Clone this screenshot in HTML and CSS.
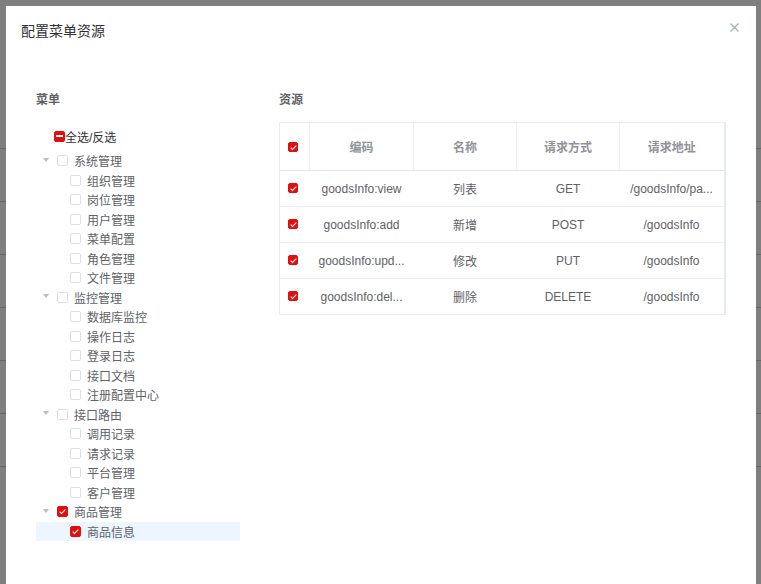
FILE: index.html
```html
<!DOCTYPE html>
<html lang="zh-CN">
<head>
  <meta charset="UTF-8">
  <meta name="viewport" content="width=device-width, initial-scale=1.0">
  <title>配置菜单资源</title>
  <link rel="stylesheet" href="styles.css">
</head>
<body>
  <!-- Halaman di belakang overlay -->
  <div class="page">
    <div class="page-row"></div>
    <div class="page-row"></div>
    <div class="page-row"></div>
    <div class="page-row"></div>
    <div class="page-row"></div>
    <div class="page-row"></div>
    <div class="page-row"></div>
  </div>

  <div class="overlay">
    <div class="dialog">
      <div class="dialog-header">
        <span class="dialog-title">配置菜单资源</span>
        <svg class="close" width="9" height="9" viewBox="0 0 9 9">
          <path d="M0.5 0.5 L8.5 8.5 M8.5 0.5 L0.5 8.5" stroke="#9fb0c4" stroke-width="1.2" fill="none"/>
        </svg>
      </div>

      <div class="dialog-body">
        <div class="menu-col">
          <div class="col-title">菜单</div>
          <div class="check-all">
            <span class="cb half"><i></i></span><span class="check-all-label">全选/反选</span>
          </div>

          <div class="tree" id="tree"></div>
        </div>

        <div class="res-col">
          <div class="col-title">资源</div>
          <table class="res-table">
            <colgroup>
              <col style="width:30px">
              <col style="width:104px">
              <col style="width:103px">
              <col style="width:103px">
              <col style="width:105px">
            </colgroup>
            <thead>
              <tr>
                <th><span class="cb on"></span></th>
                <th>编码</th>
                <th>名称</th>
                <th>请求方式</th>
                <th>请求地址</th>
              </tr>
            </thead>
            <tbody id="resBody"></tbody>
          </table>
        </div>
      </div>
    </div>
  </div>

  <script>
    // data menu pohon
    const menuData = [
      { name: '系统管理', children: ['组织管理', '岗位管理', '用户管理', '菜单配置', '角色管理', '文件管理'] },
      { name: '监控管理', children: ['数据库监控', '操作日志', '登录日志', '接口文档', '注册配置中心'] },
      { name: '接口路由', children: ['调用记录', '请求记录', '平台管理', '客户管理'] },
      { name: '商品管理', children: ['商品信息'], checked: true }
    ];

    const tree = document.getElementById('tree');
    menuData.forEach(group => {
      const row = document.createElement('div');
      row.className = 'node';
      row.innerHTML = '<span class="caret"></span><span class="cb' + (group.checked ? ' on' : '') + '"></span><span class="node-label">' + group.name + '</span>';
      tree.appendChild(row);

      group.children.forEach(child => {
        const sub = document.createElement('div');
        sub.className = 'node child' + (group.checked ? ' current' : '');
        sub.innerHTML = '<span class="caret empty"></span><span class="cb' + (group.checked ? ' on' : '') + '"></span><span class="node-label">' + child + '</span>';
        tree.appendChild(sub);
      });
    });

    // data resource (teks yang tampil sudah dipotong seperti di tabel)
    const resources = [
      ['goodsInfo:view', '列表', 'GET', '/goodsInfo/pa...'],
      ['goodsInfo:add', '新增', 'POST', '/goodsInfo'],
      ['goodsInfo:upd...', '修改', 'PUT', '/goodsInfo'],
      ['goodsInfo:del...', '删除', 'DELETE', '/goodsInfo']
    ];

    const resBody = document.getElementById('resBody');
    resources.forEach(item => {
      const tr = document.createElement('tr');
      tr.innerHTML = '<td><span class="cb on"></span></td>' +
        item.map(v => '<td><div class="cell">' + v + '</div></td>').join('');
      resBody.appendChild(tr);
    });
  </script>
</body>
</html>
```

FILE: styles.css
```css
body {
  margin: 0;
  font-family: "Liberation Sans", "Noto Sans CJK SC", sans-serif;
  background: #fff;
  overflow: hidden;
  height: 584px;
}
.page {
  padding-top: 96px;
}
.page-row {
  height: 52px;
  border-bottom: 1px solid #ccc;
}
.overlay {
  position: fixed;
  top: 0;
  left: 0;
  right: 0;
  bottom: 0;
  background: rgba(0, 0, 0, 0.5);
}
.dialog {
  margin: 6px 0 0 6px;
  width: 750px;
  height: 620px;
  background: #fff;
}
.dialog-header {
  display: flex;
  justify-content: space-between;
  align-items: flex-start;
  padding: 15px 17px 0 15px;
}
.dialog-title {
  font-size: 14px;
  line-height: 20px;
  color: #303133;
}
.close {
  margin-top: 2px;
}
.dialog-body {
  display: flex;
  padding: 51px 0 0 30px;
}
.col-title {
  font-size: 12px;
  line-height: 16px;
  font-weight: bold;
  color: #606266;
}
.menu-col {
  width: 204px;
}
.res-col {
  margin-left: 39px;
  width: 446px;
}

/* checkbox */
.cb {
  position: relative;
  display: inline-flex;
  align-items: center;
  justify-content: center;
  box-sizing: border-box;
  width: 11px;
  height: 11px;
  border: 1px solid #dcdfe6;
  border-radius: 2px;
  background: #fff;
  flex-shrink: 0;
}
.cb.on, .cb.half {
  background: #e0100f;
  border-color: #e0100f;
}
.cb.on::after {
  content: "";
  position: absolute;
  left: 3px;
  top: 1px;
  width: 2px;
  height: 5px;
  border: solid #fff;
  border-width: 0 1.5px 1.5px 0;
  transform: rotate(45deg);
}
.cb.half i {
  display: block;
  width: 7px;
  height: 2px;
  background: #fff;
}

.check-all {
  display: flex;
  align-items: center;
  height: 16px;
  margin-top: 20px;
  padding-left: 18px;
}
.check-all-label {
  font-size: 12px;
  color: #303133;
}

/* tree */
.tree {
  margin-top: 7px;
}
.node {
  display: flex;
  align-items: center;
  height: 19.5px;
  font-size: 12px;
  color: #606266;
}
.node.child {
  padding-left: 13px;
}
.node.current {
  background: #edf5fe;
}
.caret {
  display: flex;
  justify-content: center;
  width: 19px;
  margin-right: 2px;
  margin-top: -2px;
}
.caret::before {
  content: "";
  border-left: 3.5px solid transparent;
  border-right: 3.5px solid transparent;
  border-top: 4px solid #b8bcc4;
}
.caret.empty::before {
  border-top-color: transparent;
}
.node-label {
  margin-left: 6px;
}

/* table */
.res-table {
  margin-top: 14px;
  width: 446px;
  table-layout: fixed;
  border-collapse: collapse;
  border: 1px solid #ebeef5;
  border-right: 2px solid #e6ebf3;
  font-size: 12px;
}
.res-table th {
  height: 47px;
  padding: 0;
  color: #909399;
  font-weight: 600;
  text-align: center;
  border-right: 1px solid #ebeef5;
  border-bottom: 1px solid #e4e7ed;
}
.res-table th:first-child,
.res-table td:first-child {
  text-align: left;
  padding-left: 8px;
}
.res-table th:first-child .cb {
  margin-top: 4px;
}
.res-table td {
  height: 35px;
  padding: 0;
  color: #606266;
  text-align: center;
  border-bottom: 1px solid #ebeef5;
}
.res-table th .cb, .res-table td .cb {
  width: 10px;
  height: 10px;
}
.cell {
  padding: 0 6px;
  white-space: nowrap;
  overflow: hidden;
}
```
